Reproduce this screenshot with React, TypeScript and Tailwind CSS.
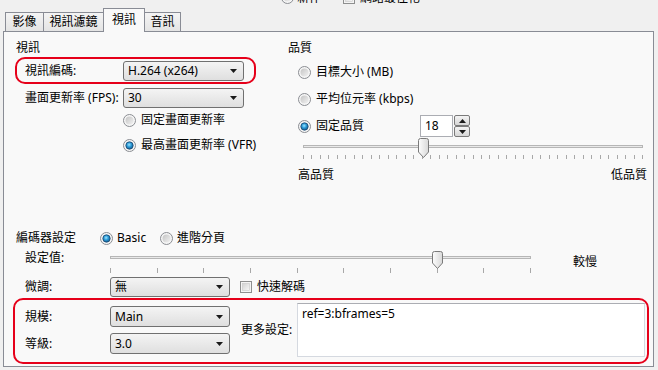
import React from "react";

function Radio({ checked }: { checked?: boolean }) {
  return (
    <svg width="13" height="13" viewBox="0 0 13 13" className="shrink-0">
      <defs>
        <linearGradient id="rOffG" x1="0" y1="0" x2="1" y2="1">
          <stop offset="0" stopColor="#c4c4c4" />
          <stop offset="1" stopColor="#f2f2f2" />
        </linearGradient>
        <radialGradient id="rOnG" cx="45%" cy="40%" r="65%">
          <stop offset="0" stopColor="#9fe6ff" />
          <stop offset="0.45" stopColor="#2b9bd8" />
          <stop offset="1" stopColor="#0f4f82" />
        </radialGradient>
      </defs>
      <circle cx="6.5" cy="6.5" r="6" fill="#f6f6f6" stroke="#8a8d92" />
      {checked ? (
        <circle cx="6.5" cy="6.5" r="3.7" fill="url(#rOnG)" stroke="#1d4b73" strokeWidth="0.8" />
      ) : (
        <circle cx="6.5" cy="6.5" r="4" fill="url(#rOffG)" />
      )}
    </svg>
  );
}

function Check() {
  return (
    <svg width="12" height="12" viewBox="0 0 12 12" className="shrink-0">
      <defs>
        <linearGradient id="cbG" x1="0" y1="0" x2="1" y2="1">
          <stop offset="0" stopColor="#d2d2d2" />
          <stop offset="1" stopColor="#f8f8f8" />
        </linearGradient>
      </defs>
      <rect x="0.5" y="0.5" width="11" height="11" fill="#f4f4f4" stroke="#8e8f8f" />
      <rect x="2.5" y="2.5" width="7" height="7" fill="url(#cbG)" stroke="#c9c9c9" strokeWidth="0.6" />
    </svg>
  );
}

function Arrow({ up }: { up?: boolean }) {
  return (
    <svg width="7" height="4" viewBox="0 0 7 4" className="shrink-0">
      <path d={up ? "M0 4H7L3.5 0Z" : "M0 0H7L3.5 4Z"} fill="#1a1a1a" />
    </svg>
  );
}

function Combo({ value, className }: { value: string; className: string }) {
  return (
    <div
      className={
        "flex shrink-0 items-center justify-between rounded-[3px] border border-[#707070] bg-linear-to-b from-[#f4f4f4] to-[#dfdfdf] pl-[4px] pr-[6px] " +
        className
      }
    >
      <span>{value}</span>
      <Arrow />
    </div>
  );
}

function thumbPath(x0: number, y0: number, h: number) {
  return `M${x0 + 0.5} ${y0 + 2.5} Q${x0 + 0.5} ${y0 + 0.5} ${x0 + 2.5} ${y0 + 0.5} H${x0 + 8.5} Q${x0 + 10.5} ${y0 + 0.5} ${x0 + 10.5} ${y0 + 2.5} V${y0 + h - 6} L${x0 + 5.5} ${y0 + h - 0.5} L${x0 + 0.5} ${y0 + h - 6} Z`;
}

function ThumbDefs() {
  return (
    <defs>
      <linearGradient id="thG" x1="0" y1="0" x2="1" y2="0">
        <stop offset="0" stopColor="#fdfdfd" />
        <stop offset="1" stopColor="#d8d8d8" />
      </linearGradient>
    </defs>
  );
}

function QualitySlider() {
  const ticks = Array.from({ length: 41 }, (_, i) => Math.round((i * 339) / 40) + 0.5);
  return (
    <svg width="341" height="23" viewBox="0 0 341 23">
      <ThumbDefs />
      <rect x="0.5" y="7.5" width="339" height="2" fill="#e9e9e9" stroke="#b6b6b6" />
      {ticks.map((x, i) => (
        <line key={i} x1={x} x2={x} y1="17" y2="21" stroke="#a8a8a8" />
      ))}
      <path d={thumbPath(115, 0, 20)} fill="url(#thG)" stroke="#7a7a7a" />
    </svg>
  );
}

function PresetSlider() {
  const ticks = Array.from({ length: 10 }, (_, i) => Math.round((i * 420) / 9) + 0.5);
  return (
    <svg width="422" height="26" viewBox="0 0 422 26" className="shrink-0">
      <ThumbDefs />
      <rect x="0.5" y="8.5" width="420" height="2" fill="#e9e9e9" stroke="#b6b6b6" />
      {ticks.map((x, i) => (
        <line key={i} x1={x} x2={x} y1="20" y2="25" stroke="#a8a8a8" />
      ))}
      <path d={thumbPath(322, 3, 18)} fill="url(#thG)" stroke="#7a7a7a" />
    </svg>
  );
}

function SpinBtn({ up }: { up?: boolean }) {
  return (
    <div className="flex h-[11px] w-[16px] items-center justify-center rounded-[2px] border border-[#7a7a7a] bg-linear-to-b from-[#f4f4f4] to-[#d6d6d6]">
      <Arrow up={up} />
    </div>
  );
}

function Spin() {
  return (
    <div className="flex h-[22px]">
      <div className="flex h-[22px] w-[33px] items-center border border-[#abadb3] bg-white pl-[4px]">18</div>
      <div className="ml-[1px] flex flex-col">
        <SpinBtn up />
        <SpinBtn />
      </div>
    </div>
  );
}

function Tab({ label, selected, className }: { label: string; selected?: boolean; className: string }) {
  return (
    <div
      className={
        "flex items-center justify-center border border-b-0 border-[#898c95] " +
        (selected
          ? "relative z-10 -mb-[1px] h-[24px] bg-[#f9f9f9] pb-[2px] "
          : "h-[19px] bg-linear-to-b from-[#f4f4f4] to-[#e4e4e4] ") +
        className
      }
    >
      {label}
    </div>
  );
}

export default function App() {
  return (
    <div className="h-[370px] w-[658px] overflow-hidden bg-[#f0f0f0] font-['Noto_Sans','Noto_Sans_CJK_TC',sans-serif] text-[12px] leading-[16px] text-black">
      {/* cut-off row at the very top */}
      <div className="h-[8px] overflow-hidden">
        <div className="-mt-[9px] flex h-[13px] items-center pl-[281px]">
          <Radio />
          <span className="ml-[3px] w-[46px]">新作</span>
          <Check />
          <span className="ml-[5px]">網路最佳化</span>
        </div>
      </div>

      {/* tabs */}
      <div className="flex h-[23px] items-end pl-[5px]">
        <Tab label="影像" className="w-[39px]" />
        <Tab label="視訊濾鏡" className="-ml-[1px] w-[61px]" />
        <Tab label="視訊" selected className="-ml-[1px] w-[42px]" />
        <Tab label="音訊" className="-ml-[1px] w-[37px]" />
      </div>

      {/* panel */}
      <div className="ml-[3px] flex h-[336px] w-[651px] flex-col border border-[#898c95] bg-[#f9f9f9]">
        <div className="flex h-[198px] shrink-0">
          {/* left column */}
          <div className="ml-[12px] flex w-[272px] flex-col">
            <div className="mt-[8px] h-[16px]">視訊</div>
            <div className="-ml-[1px] mt-[1px] flex h-[27px] w-[241px] items-center rounded-[10px] border-2 border-[#e6001a] pl-[8px]">
              <span className="w-[98px]">視訊編碼:</span>
              <Combo value="H.264 (x264)" className="h-[20px] w-[121px]" />
            </div>
            <div className="mt-[4px] flex h-[20px] items-center pl-[9px]">
              <span className="w-[98px]">畫面更新率 (FPS):</span>
              <Combo value="30" className="h-[20px] w-[121px]" />
            </div>
            <div className="mt-[2px] flex h-[20px] items-center gap-[5px] pl-[107px]">
              <Radio />
              <span>固定畫面更新率</span>
            </div>
            <div className="mt-[5px] flex h-[20px] items-center gap-[5px] pl-[107px]">
              <Radio checked />
              <span>最高畫面更新率 (VFR)</span>
            </div>
          </div>

          {/* right column */}
          <div className="flex w-[365px] flex-col">
            <div className="mt-[8px] h-[16px]">品質</div>
            <div className="mt-[6px] flex h-[20px] items-center gap-[5px] pl-[10px]">
              <Radio />
              <span>目標大小 (MB)</span>
            </div>
            <div className="mt-[7px] flex h-[20px] items-center gap-[5px] pl-[10px]">
              <Radio />
              <span>平均位元率 (kbps)</span>
            </div>
            <div className="mt-[6px] flex h-[22px] items-center pl-[10px]">
              <Radio checked />
              <span className="ml-[5px] w-[104px]">固定品質</span>
              <Spin />
            </div>
            <div className="ml-[15px] mt-[1px] h-[23px]">
              <QualitySlider />
            </div>
            <div className="mt-[6px] flex h-[16px] w-[359px] justify-between pl-[10px]">
              <span>高品質</span>
              <span>低品質</span>
            </div>
          </div>
        </div>

        {/* encoder settings */}
        <div className="ml-[12px] flex h-[16px] items-center">
          <span className="w-[84px]">編碼器設定</span>
          <Radio checked />
          <span className="ml-[4px] w-[43px]">Basic</span>
          <Radio />
          <span className="ml-[4px]">進階分頁</span>
        </div>

        <div className="ml-[21px] mt-[2px] flex h-[26px] items-start">
          <span className="mt-[2px] w-[85px]">設定值:</span>
          <PresetSlider />
          <span className="ml-[41px] mt-[6px]">較慢</span>
        </div>

        <div className="ml-[21px] mt-[3px] flex h-[20px] items-center">
          <span className="w-[85px]">微調:</span>
          <Combo value="無" className="h-[20px] w-[120px]" />
          <span className="ml-[10px] flex">
            <Check />
          </span>
          <span className="ml-[5px]">快速解碼</span>
        </div>

        <div className="ml-[9px] mt-[1px] flex h-[66px] w-[636px] items-start rounded-[10px] border-2 border-[#e6001a] pl-[10px] pt-[3px]">
          <div className="mt-[3px] flex flex-col gap-[6px]">
            <div className="flex h-[21px] items-center">
              <span className="w-[85px]">規模:</span>
              <Combo value="Main" className="h-[21px] w-[120px]" />
            </div>
            <div className="flex h-[21px] items-center">
              <span className="w-[85px]">等級:</span>
              <Combo value="3.0" className="h-[21px] w-[120px]" />
            </div>
          </div>
          <span className="ml-[11px] mt-[19px] w-[56px]">更多設定:</span>
          <div className="h-[54px] w-[348px] border border-[#d5d9e0] border-t-[#abadb3] bg-white px-[4px] pt-[2px]">
            ref=3:bframes=5
          </div>
        </div>
      </div>
    </div>
  );
}
